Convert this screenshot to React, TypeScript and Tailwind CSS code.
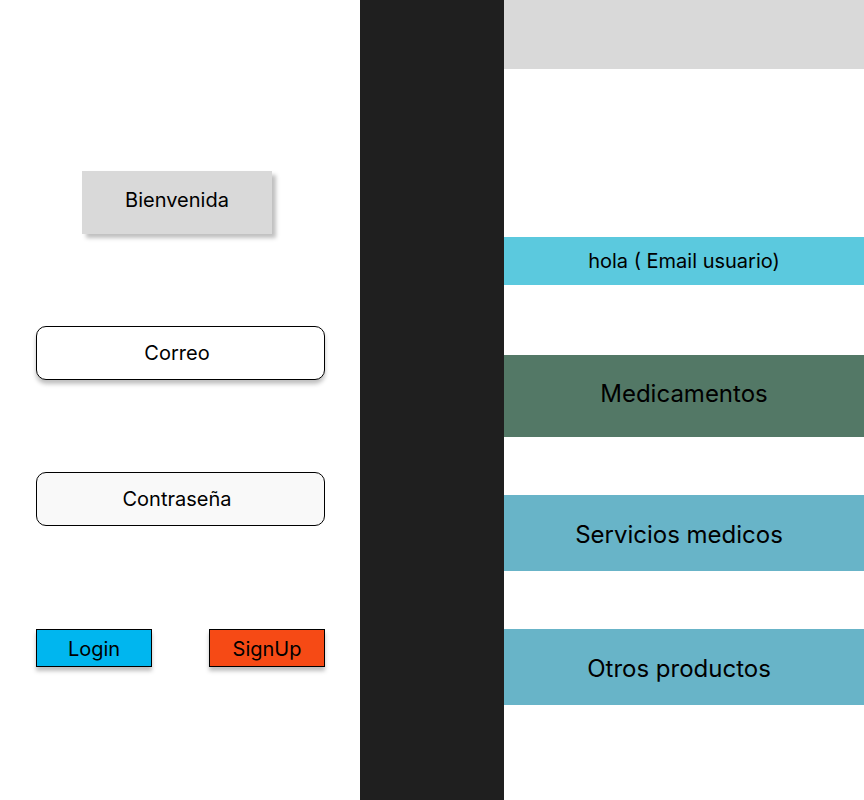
export default function App() {
  return (
    <div className="flex h-[800px] w-[864px] bg-white font-['Inter',sans-serif] text-black">
      <div className="flex w-[360px] flex-col">
        <div className="ml-[82px] mt-[171px] flex h-[63px] w-[190px] items-center justify-center bg-[#d9d9d9] pb-[6px] text-[20px] shadow-[4px_4px_4px_rgba(0,0,0,0.25)]">
          Bienvenida
        </div>
        <div className="ml-[36px] mt-[92px] flex h-[54px] w-[289px] items-center justify-center rounded-[10px] border border-black bg-white pr-[7px] text-[20px] shadow-[0_4px_4px_rgba(0,0,0,0.25)]">
          Correo
        </div>
        <div className="ml-[36px] mt-[92px] flex h-[54px] w-[289px] items-center justify-center rounded-[10px] border border-black bg-[#f9f9f9] pr-[7px] text-[20px]">
          Contraseña
        </div>
        <div className="ml-[36px] mt-[103px] flex w-[289px] justify-between">
          <div className="flex h-[38px] w-[116px] items-center justify-center border border-black bg-[#00b6ef] pt-[2px] text-[20px] shadow-[0_4px_4px_rgba(0,0,0,0.25)]">
            Login
          </div>
          <div className="flex h-[38px] w-[116px] items-center justify-center border border-black bg-[#f64a15] pt-[2px] text-[20px] shadow-[0_4px_4px_rgba(0,0,0,0.25)]">
            SignUp
          </div>
        </div>
      </div>
      <div className="w-[144px] bg-[#1f1f1f]" />
      <div className="flex w-[360px] flex-col">
        <div className="h-[69px] bg-[#d9d9d9]" />
        <div className="mt-[168px] flex h-[48px] items-center justify-center bg-[#5bc9de] text-[20px]">
          hola ( Email usuario)
        </div>
        <div className="mt-[70px] flex h-[82px] items-center justify-center bg-[#537866] pb-[4px] text-[24px]">
          Medicamentos
        </div>
        <div className="mt-[58px] flex h-[76px] items-center justify-center bg-[#68b4c8] pr-[10px] pt-[4px] text-[24px]">
          Servicios medicos
        </div>
        <div className="mt-[58px] flex h-[76px] items-center justify-center bg-[#68b4c8] pr-[10px] pt-[4px] text-[24px]">
          Otros productos
        </div>
      </div>
    </div>
  );
}
